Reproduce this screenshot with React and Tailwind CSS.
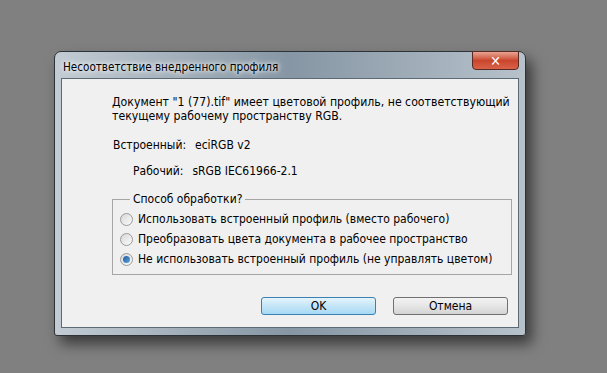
import React from "react";

const font = { fontFamily: "Tahoma, 'DejaVu Sans Condensed', 'Liberation Sans', sans-serif" };

function Radio({ checked, label }) {
  return (
    <div className="flex h-[20px] items-center">
      <span className="ml-[7px] flex h-[13px] w-[13px] items-center justify-center rounded-full border border-[#9a9a9a] bg-gradient-to-br from-[#d8d8d8] to-[#fbfbfb]">
        {checked && (
          <span className="h-[7px] w-[7px] rounded-full bg-gradient-to-br from-[#1c5b9e] to-[#5fa3de]" />
        )}
      </span>
      <span className="ml-[5px]">{label}</span>
    </div>
  );
}

export default function App() {
  return (
    <div
      className="h-[373px] w-[607px] overflow-hidden bg-[#808080] pl-[54px] pt-[51px] text-[12px] leading-[14px] text-black"
      style={font}
    >
      <div className="flex h-[285px] w-[472px] flex-col rounded-t-[7px] rounded-b-[3px] border border-[#2e3338] bg-gradient-to-r from-[#c3ccd4] via-[#8696a4] to-[#b7c2cb] px-[6px] pb-[7px] shadow-[6px_8px_14px_rgba(0,0,0,0.55)]">
        {/* title bar */}
        <div className="flex h-[26px] items-start justify-between">
          <div className="ml-[2px] mt-[8px] text-[11.6px] [text-shadow:0_0_6px_#fff,0_0_4px_#fff]">
            Несоответствие внедренного профиля
          </div>
          <div className="-mt-px flex h-[19px] w-[47px] items-center justify-center rounded-b-[4px] border border-[#5a2a22] bg-gradient-to-b from-[#e8a493] via-[#c9452c] to-[#d9624a] text-[14px] font-bold leading-none text-white">
            ✕
          </div>
        </div>
        {/* client area */}
        <div className="flex flex-1 flex-col border border-[#5c6a76] bg-[#f0f0f0]">
          <div className="ml-[50px] mt-[16px] text-[12.2px]">
            Документ "1 (77).tif" имеет цветовой профиль, не соответствующий
            <br />
            текущему рабочему пространству RGB.
          </div>
          <div className="ml-[51px] mt-[15px] flex">
            <span>Встроенный:</span>
            <span className="ml-[9px]">eciRGB v2</span>
          </div>
          <div className="ml-[71px] mt-[12px] flex">
            <span>Рабочий:</span>
            <span className="ml-[9px]">sRGB IEC61966-2.1</span>
          </div>
          <fieldset className="ml-[50px] mt-[14px] h-[83px] w-[400px] border border-[#a6a6a6] pb-[4px]">
            <legend className="ml-[17px] px-[3px]">Способ обработки?</legend>
            <div className="mt-[3px]">
              <Radio label="Использовать встроенный профиль (вместо рабочего)" />
              <Radio label="Преобразовать цвета документа в рабочее пространство" />
              <Radio checked label="Не использовать встроенный профиль (не управлять цветом)" />
            </div>
          </fieldset>
          <div className="mr-[10px] mt-[22px] flex justify-end gap-[17px]">
            <button className="h-[18px] w-[115px] rounded-[3px] border border-[#3c7fb1] bg-gradient-to-b from-[#e5f4fc] via-[#c4e5f6] to-[#a7d9f5] text-[12px] leading-none">
              OK
            </button>
            <button className="h-[18px] w-[115px] rounded-[3px] border border-[#707070] bg-gradient-to-b from-[#f2f2f2] via-[#e6e6e6] to-[#d3d3d3] text-[12px] leading-none">
              Отмена
            </button>
          </div>
        </div>
      </div>
    </div>
  );
}
